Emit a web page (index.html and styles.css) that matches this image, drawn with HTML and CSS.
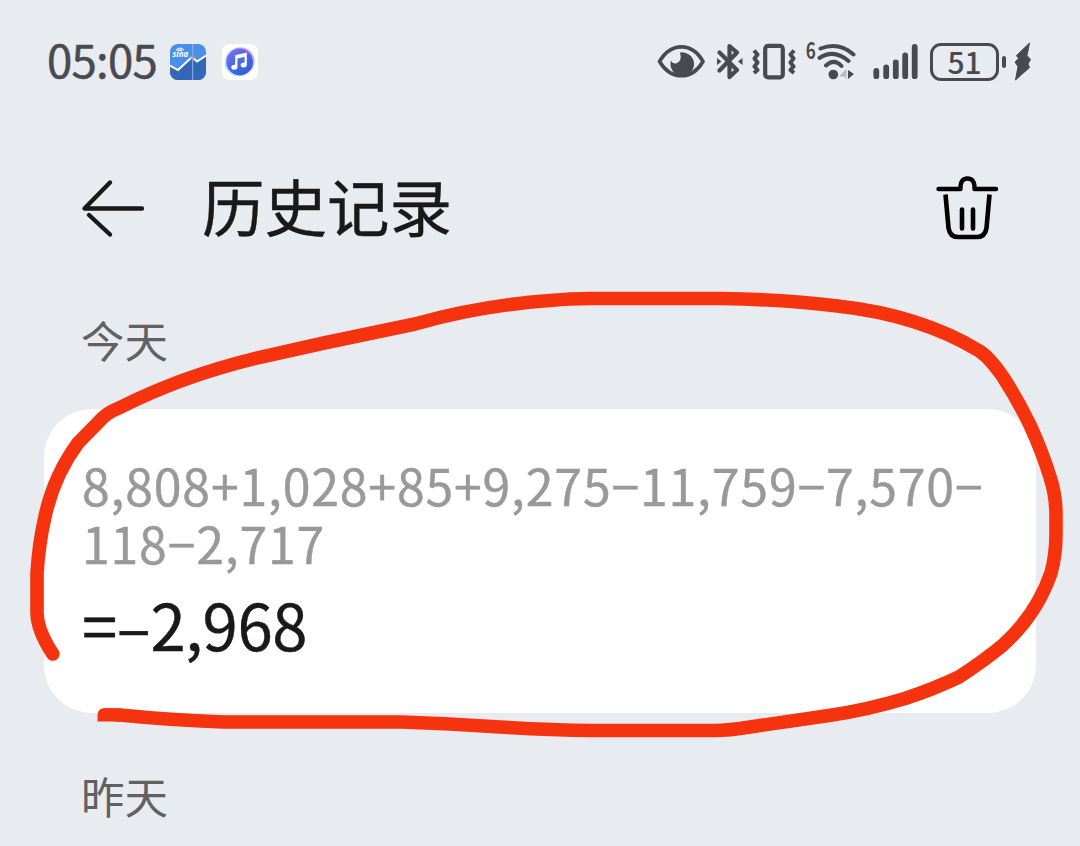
FILE: index.html
```html
<!DOCTYPE html>
<html lang="zh-CN">
<head>
<meta charset="utf-8">
<title>历史记录</title>
<link rel="stylesheet" href="styles.css">
</head>
<body>
<main class="screen">
  <div class="status-bar">
    <span class="clock">05:05</span>
    <svg class="app-icon" width="36" height="36" viewBox="0 0 36 36">
      <defs>
        <clipPath id="tile"><rect width="36" height="36" rx="8"/></clipPath>
      </defs>
      <g clip-path="url(#tile)">
        <rect width="36" height="36" fill="#4a90ea"/>
        <path d="M0 21.500 8 26l14-13 5 4.500 9-6V36H0Z" fill="#3467b8"/>
        <path d="M0 21.500 8 26l14-13 5 4.500 9-6" fill="none" stroke="#fff" stroke-width="2"/>
        <path d="M22.700 0V36" stroke="#8db5e6" stroke-width="1"/>
        <circle cx="22.500" cy="13.500" r="1.800" fill="#c79d7c"/>
        <path d="M6 6.500q4-5 8 0M8 7q2-2 4 0" fill="none" stroke="#fff" stroke-width="1.200"/>
      </g>
      <text class="sina" x="2.500" y="12.500">sina</text>
    </svg>
    <svg class="music-icon" width="36" height="36" viewBox="0 0 36 36">
      <defs>
        <linearGradient id="disc" x1="0" y1="0" x2="0.600" y2="1">
          <stop offset="0" stop-color="#7e70f4"/>
          <stop offset="1" stop-color="#2c63d6"/>
        </linearGradient>
      </defs>
      <rect width="36" height="36" rx="8" fill="#fff"/>
      <circle cx="16.800" cy="18.300" r="14" fill="#9ee3fa"/>
      <circle cx="18.600" cy="17.200" r="14" fill="#dba8f5"/>
      <circle cx="17.700" cy="17.900" r="13.300" fill="url(#disc)"/>
      <path d="M14.300 23V12.200l9.400-2.200v10.500" fill="none" stroke="#fff" stroke-width="2.200"/>
      <path d="M14.300 13.200l9.400-2.200" stroke="#fff" stroke-width="3"/>
      <ellipse cx="12.300" cy="23.300" rx="3" ry="2.500" fill="#fff"/>
      <ellipse cx="21.700" cy="21" rx="3" ry="2.500" fill="#fff"/>
    </svg>

    <div class="indicators">
      <svg class="eye" width="48" height="36" viewBox="657 43 48 36">
        <path d="M659.500 60.500C671 41 692 41 703 60.500C692 79.500 671 79.500 659.500 60.500Z" fill="none" stroke="#484a4d" stroke-width="3.600" stroke-linejoin="round"/>
        <path d="M680 51.500A11.800 11.800 0 1 1 671 59.500Q672.500 63 676 62.500Q682.500 60.500 680 51.500Z" fill="#484a4d"/>
      </svg>
      <svg class="bluetooth" width="26" height="38" viewBox="717 42 26 38">
        <path d="M719.500 51.500 737 69 729.500 76V45L737 51.500 719.500 69.500" fill="none" stroke="#484a4d" stroke-width="4.200" stroke-linecap="round" stroke-linejoin="round"/>
        <path d="M717 57 721.500 60.500 717 64ZM742.500 57 738 60.500 742.500 64Z" fill="#484a4d"/>
      </svg>
      <svg class="vibrate" width="46" height="38" viewBox="751 42 46 38">
        <rect x="765.200" y="44.800" width="17.600" height="31.600" rx="3" fill="none" stroke="#484a4d" stroke-width="4.200"/>
        <path d="M754 49.500 757.500 53.500 754.500 57.500 757.500 61.500 754.500 65.500 757.500 69 754 72M794 49.500 790.500 53.500 793.500 57.500 790.500 61.500 793.500 65.500 790.500 69 794 72" fill="none" stroke="#484a4d" stroke-width="4" stroke-linejoin="round"/>
      </svg>
      <svg class="wifi" width="56" height="40" viewBox="802 40 56 40">
        <text class="wifi-gen" x="805.800" y="58" textLength="10" lengthAdjust="spacingAndGlyphs">6</text>
        <path d="M820.500 47.500Q839 40.500 853.500 53.500M819.500 57Q834 47.500 848.500 60M826 64.500Q834 57 841.500 65" fill="none" stroke="#484a4d" stroke-width="4" stroke-linecap="round"/>
        <circle cx="833.300" cy="73.500" r="4.800" fill="#484a4d"/>
        <path d="M846 69V78M845.500 69.500 840.500 75H845.500" fill="#b5b8bc" stroke="#b5b8bc" stroke-width="1.200"/>
        <path d="M848 69 854 73 848 78Z" fill="#484a4d"/>
      </svg>
      <svg class="signal" width="46" height="38" viewBox="872 42 46 38">
        <path d="M876.300 69.800V75.200M886.200 66.500V75.200M895.800 61.500V75.200M905.200 54.500V75.200M914.700 46V75.200" stroke="#484a4d" stroke-width="5.800" stroke-linecap="round"/>
      </svg>
      <div class="battery">51</div>
      <span class="battery-tip"></span>
      <svg class="bolt" width="18" height="40" viewBox="1014 41 18 40">
        <path d="M1029.500 42 1016.500 54.500 1018.500 57.500 1015 61 1018 65.500 1015.500 79 1029.500 66.500 1028 63 1030.500 58.500 1027 54.500Z" fill="#484a4d" stroke="#484a4d" stroke-width="1" stroke-linejoin="round"/>
      </svg>
    </div>
  </div>

  <header class="header">
    <svg class="back" width="64" height="60" viewBox="81 178 64 60">
      <path d="M110 182.500 84.500 208.500H142M89 215 110 234.500" fill="none" stroke="#19191a" stroke-width="4.400" stroke-linecap="round" stroke-linejoin="round"/>
    </svg>
    <h1 class="title">历史记录</h1>
    <svg class="trash" width="64" height="66" viewBox="935 175 64 66">
      <path d="M938.500 189H960.500Q960 178.500 967.500 178.500T974.500 189H996" fill="none" stroke="#000" stroke-width="4.400" stroke-linecap="round" stroke-linejoin="round"/>
      <path d="M945.500 194.500 948.500 228Q950 237 958 237H977Q985 237 986.500 228L989.500 194.500" fill="none" stroke="#000" stroke-width="4.600"/>
      <path d="M962 209.500V228.500M973 209.500V228.500" stroke="#000" stroke-width="4.600" stroke-linecap="round"/>
    </svg>
  </header>

  <section class="day">
    <h2 class="day-label">今天</h2>
    <article class="entry">
      <p class="expression">8,808+1,028+85+9,275−11,759−7,570−<br>118−2,717</p>
      <p class="result">=–2,968</p>
    </article>
  </section>
  <section class="day">
    <h2 class="day-label">昨天</h2>
  </section>

  <svg class="marker" width="1080" height="846" viewBox="0 0 1080 846">
    <path class="marker-line" d="M52.800 654Q37 630 37 612V573Q39 543 44.500 519Q53 477 78 443L103 417.500Q109 412 119 408Q180 377 253 359L324 343 415 324Q480 305.500 550 300.500Q572 298.500 590 298.500H722Q785 299.500 837.500 306Q920 315 979.500 351Q990 358 1003 377Q1018 400 1030 425Q1042 451 1050 477Q1056 495 1056 515V534Q1056 555 1051 573Q1037 614 1003 645Q985 660 959 677Q935 688.500 905 698.500Q867 710 829 715.500L750 727Q729 730.500 714 730.500H591Q550 730 500 727Q450 723.500 402 722H223Q170 720 120 715"/>
    <path class="marker-tip" d="M97.500 721.500V715Q98 708 105 708L121 708.200 119.500 722 112 721.500Z"/>
  </svg>
</main>
</body>
</html>
```

FILE: styles.css
```css
* {
  box-sizing: border-box;
}

body {
  margin: 0;
  font-family: "Noto Sans CJK SC", "Noto Sans", sans-serif;
  background: #e8ebf0;
}

.screen {
  position: relative;
  width: 1080px;
  height: 846px;
  overflow: hidden;
}

.status-bar {
  display: flex;
  align-items: center;
  height: 123px;
  padding: 0 48px 0 47px;
  color: #484a4d;
}

.clock {
  width: 123px;
  padding-bottom: 7px;
  font-size: 45.500px;
  font-weight: 400;
  line-height: 60px;
  letter-spacing: -0.700px;
  -webkit-text-stroke: 0.500px #484a4d;
}

.music-icon {
  margin-left: 16px;
}

.sina {
  font: italic 700 8px "Noto Sans", sans-serif;
  fill: #fff;
}

.indicators {
  display: flex;
  align-items: center;
  margin-left: auto;
}

.bluetooth {
  margin-left: 12px;
}

.vibrate {
  margin-left: 8px;
}

.wifi {
  margin: -2px 0 0 5px;
}

.wifi-gen {
  font: 700 22px "Noto Sans CJK SC", sans-serif;
  fill: #484a4d;
}

.signal {
  margin-left: 14px;
}

.battery {
  width: 69px;
  height: 38px;
  margin-left: 12px;
  border: 3px solid #484a4d;
  border-radius: 11px;
  font-size: 30px;
  font-weight: 500;
  line-height: 30px;
  text-align: center;
}

.battery-tip {
  width: 4px;
  height: 12px;
  margin-left: 3px;
  border-radius: 2px;
  background: #484a4d;
}

.bolt {
  margin-left: 8px;
}

.header {
  display: flex;
  align-items: center;
  height: 170px;
  padding: 0 81px;
}

.title {
  margin: 0 0 6px 57px;
  font-size: 62.500px;
  font-weight: 400;
  line-height: 80px;
  color: #19191a;
  -webkit-text-stroke: 0.400px #19191a;
}

.trash {
  margin-left: auto;
}

.day {
  padding: 17px 44px 0;
}

.day-label {
  height: 99px;
  margin: 0;
  padding-left: 37px;
  font-size: 43.500px;
  font-weight: 400;
  line-height: 60px;
  color: #5f6163;
}

.entry {
  height: 304px;
  padding: 46px 38px 0;
  border-radius: 48px;
  background: #fff;
}

.day + .day {
  padding-top: 53px;
}

.expression,
.result {
  margin: 0;
  white-space: nowrap;
}

.expression {
  font-size: 50px;
  line-height: 58px;
  letter-spacing: 0.800px;
  color: #999;
  -webkit-text-stroke: 0.400px #999;
}

.result {
  margin-top: 14px;
  font-size: 63.500px;
  line-height: 76px;
  letter-spacing: -0.400px;
  color: #19191a;
  -webkit-text-stroke: 0.400px #19191a;
}

.marker {
  position: absolute;
  top: 0;
  left: 0;
  pointer-events: none;
}

.marker-line {
  fill: none;
  stroke: #f5330f;
  stroke-width: 13.600px;
  stroke-linecap: round;
  stroke-linejoin: round;
}

.marker-tip {
  fill: #f5330f;
}
```
